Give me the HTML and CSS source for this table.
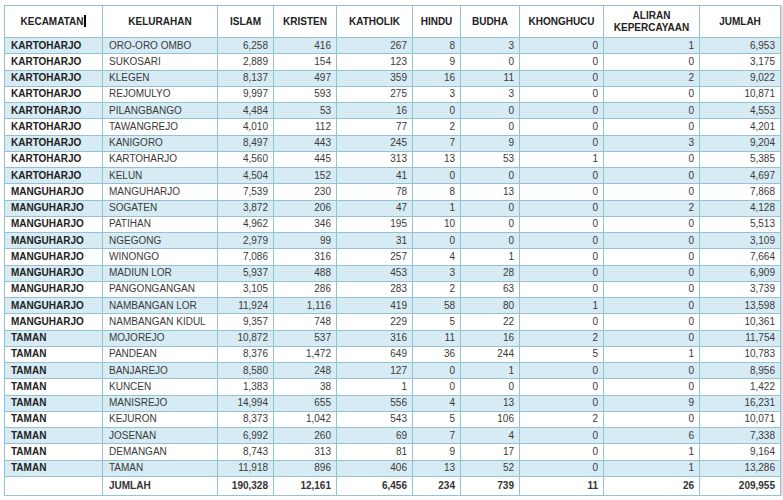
FILE: index.html
```html
<!DOCTYPE html>
<html>
<head>
<meta charset="utf-8">
<link rel="stylesheet" href="styles.css">
</head>
<body>
<table class="data">
<colgroup>
<col class="c1"><col class="c2"><col class="c3"><col class="c4"><col class="c5"><col class="c6"><col class="c7"><col class="c8"><col class="c9"><col class="c10">
</colgroup>
<thead>
<tr class="head">
<th>KECAMATAN<span class="caret"></span></th><th>KELURAHAN</th><th>ISLAM</th><th>KRISTEN</th><th>KATHOLIK</th><th>HINDU</th><th>BUDHA</th><th>KHONGHUCU</th><th>ALIRAN<br>KEPERCAYAAN</th><th>JUMLAH</th>
</tr>
</thead>
<tbody>
<tr class="alt"><td class="kec">KARTOHARJO</td><td>ORO-ORO OMBO</td><td class="n">6,258</td><td class="n">416</td><td class="n">267</td><td class="n">8</td><td class="n">3</td><td class="n">0</td><td class="n">1</td><td class="n">6,953</td></tr>
<tr><td class="kec">KARTOHARJO</td><td>SUKOSARI</td><td class="n">2,889</td><td class="n">154</td><td class="n">123</td><td class="n">9</td><td class="n">0</td><td class="n">0</td><td class="n">0</td><td class="n">3,175</td></tr>
<tr class="alt"><td class="kec">KARTOHARJO</td><td>KLEGEN</td><td class="n">8,137</td><td class="n">497</td><td class="n">359</td><td class="n">16</td><td class="n">11</td><td class="n">0</td><td class="n">2</td><td class="n">9,022</td></tr>
<tr><td class="kec">KARTOHARJO</td><td>REJOMULYO</td><td class="n">9,997</td><td class="n">593</td><td class="n">275</td><td class="n">3</td><td class="n">3</td><td class="n">0</td><td class="n">0</td><td class="n">10,871</td></tr>
<tr class="alt"><td class="kec">KARTOHARJO</td><td>PILANGBANGO</td><td class="n">4,484</td><td class="n">53</td><td class="n">16</td><td class="n">0</td><td class="n">0</td><td class="n">0</td><td class="n">0</td><td class="n">4,553</td></tr>
<tr><td class="kec">KARTOHARJO</td><td>TAWANGREJO</td><td class="n">4,010</td><td class="n">112</td><td class="n">77</td><td class="n">2</td><td class="n">0</td><td class="n">0</td><td class="n">0</td><td class="n">4,201</td></tr>
<tr class="alt"><td class="kec">KARTOHARJO</td><td>KANIGORO</td><td class="n">8,497</td><td class="n">443</td><td class="n">245</td><td class="n">7</td><td class="n">9</td><td class="n">0</td><td class="n">3</td><td class="n">9,204</td></tr>
<tr><td class="kec">KARTOHARJO</td><td>KARTOHARJO</td><td class="n">4,560</td><td class="n">445</td><td class="n">313</td><td class="n">13</td><td class="n">53</td><td class="n">1</td><td class="n">0</td><td class="n">5,385</td></tr>
<tr class="alt"><td class="kec">KARTOHARJO</td><td>KELUN</td><td class="n">4,504</td><td class="n">152</td><td class="n">41</td><td class="n">0</td><td class="n">0</td><td class="n">0</td><td class="n">0</td><td class="n">4,697</td></tr>
<tr><td class="kec">MANGUHARJO</td><td>MANGUHARJO</td><td class="n">7,539</td><td class="n">230</td><td class="n">78</td><td class="n">8</td><td class="n">13</td><td class="n">0</td><td class="n">0</td><td class="n">7,868</td></tr>
<tr class="alt"><td class="kec">MANGUHARJO</td><td>SOGATEN</td><td class="n">3,872</td><td class="n">206</td><td class="n">47</td><td class="n">1</td><td class="n">0</td><td class="n">0</td><td class="n">2</td><td class="n">4,128</td></tr>
<tr><td class="kec">MANGUHARJO</td><td>PATIHAN</td><td class="n">4,962</td><td class="n">346</td><td class="n">195</td><td class="n">10</td><td class="n">0</td><td class="n">0</td><td class="n">0</td><td class="n">5,513</td></tr>
<tr class="alt"><td class="kec">MANGUHARJO</td><td>NGEGONG</td><td class="n">2,979</td><td class="n">99</td><td class="n">31</td><td class="n">0</td><td class="n">0</td><td class="n">0</td><td class="n">0</td><td class="n">3,109</td></tr>
<tr><td class="kec">MANGUHARJO</td><td>WINONGO</td><td class="n">7,086</td><td class="n">316</td><td class="n">257</td><td class="n">4</td><td class="n">1</td><td class="n">0</td><td class="n">0</td><td class="n">7,664</td></tr>
<tr class="alt"><td class="kec">MANGUHARJO</td><td>MADIUN LOR</td><td class="n">5,937</td><td class="n">488</td><td class="n">453</td><td class="n">3</td><td class="n">28</td><td class="n">0</td><td class="n">0</td><td class="n">6,909</td></tr>
<tr><td class="kec">MANGUHARJO</td><td>PANGONGANGAN</td><td class="n">3,105</td><td class="n">286</td><td class="n">283</td><td class="n">2</td><td class="n">63</td><td class="n">0</td><td class="n">0</td><td class="n">3,739</td></tr>
<tr class="alt"><td class="kec">MANGUHARJO</td><td>NAMBANGAN LOR</td><td class="n">11,924</td><td class="n">1,116</td><td class="n">419</td><td class="n">58</td><td class="n">80</td><td class="n">1</td><td class="n">0</td><td class="n">13,598</td></tr>
<tr><td class="kec">MANGUHARJO</td><td>NAMBANGAN KIDUL</td><td class="n">9,357</td><td class="n">748</td><td class="n">229</td><td class="n">5</td><td class="n">22</td><td class="n">0</td><td class="n">0</td><td class="n">10,361</td></tr>
<tr class="alt"><td class="kec">TAMAN</td><td>MOJOREJO</td><td class="n">10,872</td><td class="n">537</td><td class="n">316</td><td class="n">11</td><td class="n">16</td><td class="n">2</td><td class="n">0</td><td class="n">11,754</td></tr>
<tr><td class="kec">TAMAN</td><td>PANDEAN</td><td class="n">8,376</td><td class="n">1,472</td><td class="n">649</td><td class="n">36</td><td class="n">244</td><td class="n">5</td><td class="n">1</td><td class="n">10,783</td></tr>
<tr class="alt"><td class="kec">TAMAN</td><td>BANJAREJO</td><td class="n">8,580</td><td class="n">248</td><td class="n">127</td><td class="n">0</td><td class="n">1</td><td class="n">0</td><td class="n">0</td><td class="n">8,956</td></tr>
<tr><td class="kec">TAMAN</td><td>KUNCEN</td><td class="n">1,383</td><td class="n">38</td><td class="n">1</td><td class="n">0</td><td class="n">0</td><td class="n">0</td><td class="n">0</td><td class="n">1,422</td></tr>
<tr class="alt"><td class="kec">TAMAN</td><td>MANISREJO</td><td class="n">14,994</td><td class="n">655</td><td class="n">556</td><td class="n">4</td><td class="n">13</td><td class="n">0</td><td class="n">9</td><td class="n">16,231</td></tr>
<tr><td class="kec">TAMAN</td><td>KEJURON</td><td class="n">8,373</td><td class="n">1,042</td><td class="n">543</td><td class="n">5</td><td class="n">106</td><td class="n">2</td><td class="n">0</td><td class="n">10,071</td></tr>
<tr class="alt"><td class="kec">TAMAN</td><td>JOSENAN</td><td class="n">6,992</td><td class="n">260</td><td class="n">69</td><td class="n">7</td><td class="n">4</td><td class="n">0</td><td class="n">6</td><td class="n">7,338</td></tr>
<tr><td class="kec">TAMAN</td><td>DEMANGAN</td><td class="n">8,743</td><td class="n">313</td><td class="n">81</td><td class="n">9</td><td class="n">17</td><td class="n">0</td><td class="n">1</td><td class="n">9,164</td></tr>
<tr class="alt"><td class="kec">TAMAN</td><td>TAMAN</td><td class="n">11,918</td><td class="n">896</td><td class="n">406</td><td class="n">13</td><td class="n">52</td><td class="n">0</td><td class="n">1</td><td class="n">13,286</td></tr>
<tr class="total"><td></td><td class="lbl">JUMLAH</td><td class="n">190,328</td><td class="n">12,161</td><td class="n">6,456</td><td class="n">234</td><td class="n">739</td><td class="n">11</td><td class="n">26</td><td class="n">209,955</td></tr>
</tbody>
</table>
</body>
</html>
```
FILE: styles.css
```css
html, body {
  margin: 0;
  padding: 0;
  background: #ffffff;
}
body {
  font-family: "Liberation Sans", Arial, sans-serif;
  font-size: 10px;
  color: #3a3a3a;
}
.data {
  margin: 5px 0 0 4px;
  border-collapse: collapse;
  table-layout: fixed;
  width: 776px;
  box-shadow: 1px 1px 2px rgba(0, 0, 0, 0.25);
}
.c1 { width: 98px; }
.c2 { width: 115px; }
.c3 { width: 56px; }
.c4 { width: 63px; }
.c5 { width: 76px; }
.c6 { width: 48px; }
.c7 { width: 59px; }
.c8 { width: 84px; }
.c9 { width: 96px; }
.c10 { width: 81px; }
.data th,
.data td {
  border: 1px solid #93c3d2;
  padding: 0 6px;
  white-space: nowrap;
  overflow: hidden;
}
.data th {
  height: 31px;
  font-weight: bold;
  color: #222;
  text-align: center;
  vertical-align: middle;
  line-height: 12px;
  background: #fff;
}
.data td {
  height: 15.25px;
  line-height: 12px;
  vertical-align: middle;
}
.data tr.alt td {
  background: #d6ebf4;
}
.data td.kec {
  font-weight: bold;
  color: #222;
}
.data td.n {
  text-align: right;
  padding-right: 5px;
}
.data tr.total td {
  height: 18px;
  font-weight: bold;
  color: #333;
}
.caret {
  display: inline-block;
  width: 2px;
  height: 12px;
  background: #000;
  vertical-align: -2px;
  margin-left: 1px;
}
```
